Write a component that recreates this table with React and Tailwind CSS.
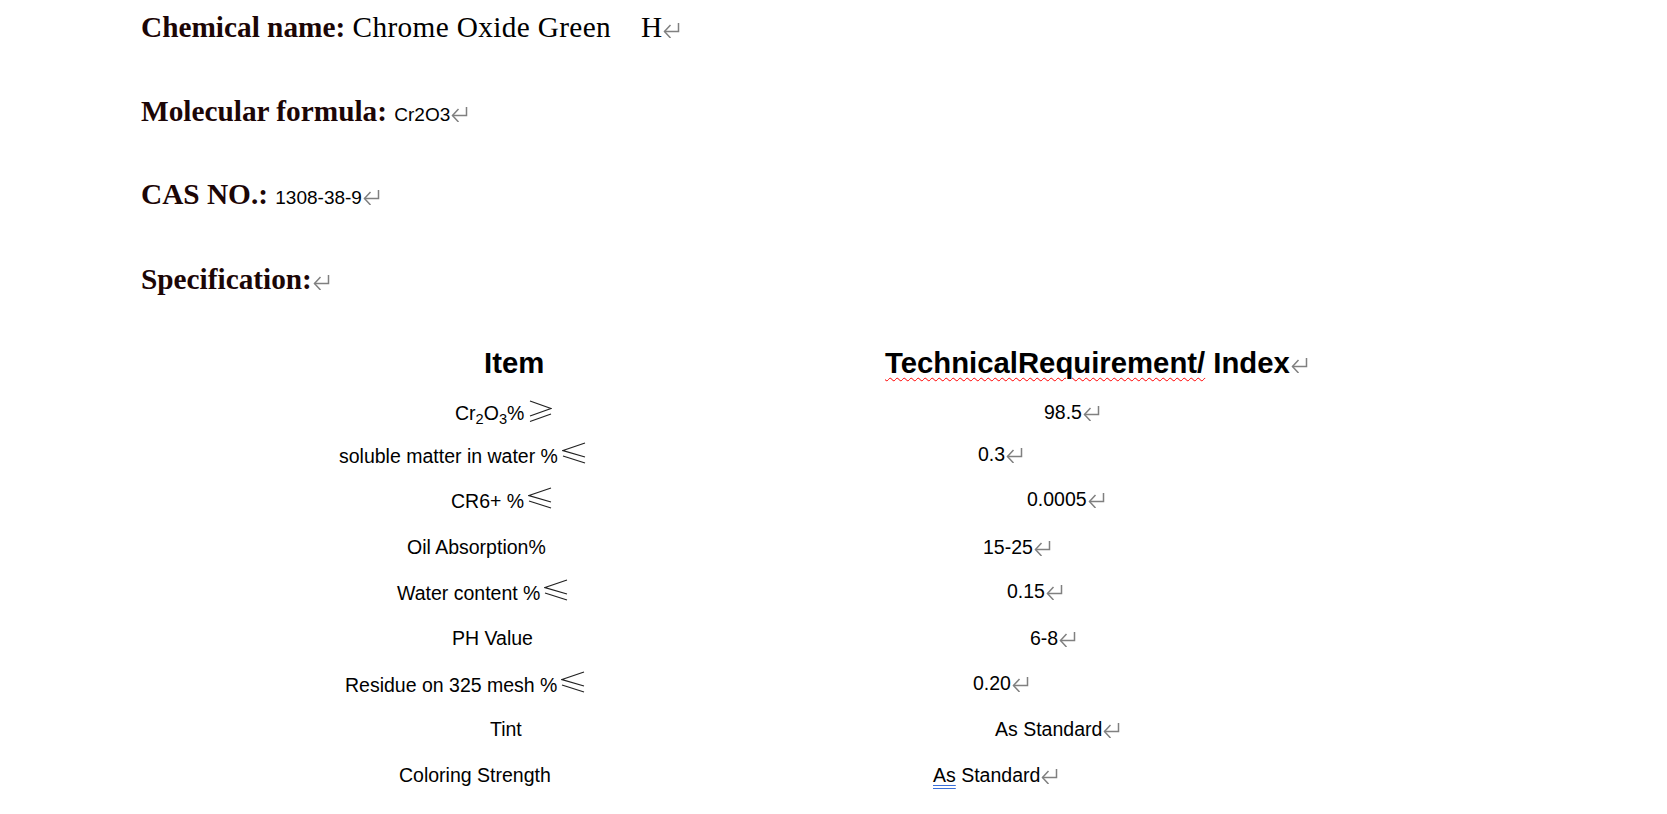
import React from "react";

const Ret = () => (
  <svg width="17" height="15" viewBox="0 0 17 15" className="inline-block ml-[1px]" fill="none" stroke="#808080" strokeWidth="1.5">
    <path d="M15.5 0V8.5H1.5" />
    <path d="M7.5 2L1.5 8.5L7.5 15" />
  </svg>
);

const Ge = () => (
  <svg width="23" height="23" viewBox="0 0 23 23" className="inline-block ml-[5px] align-[-3px]" fill="none" stroke="#222" strokeWidth="1.3">
    <path d="M1 1L22 8.5L1 16" />
    <path d="M22 14L1 21.5" />
  </svg>
);

const Le = () => (
  <svg width="24" height="22" viewBox="0 0 24 22" className="inline-block ml-[4px] align-[-1px]" fill="none" stroke="#222" strokeWidth="1.3">
    <path d="M23 1L1 8.5L23 15" />
    <path d="M1 14L23 21" />
  </svg>
);

const rows = [
  { h: "h-[42px]", a: "pl-[455px]", b: "pl-[159px]", item: (<>Cr<sub>2</sub>O<sub>3</sub>%<Ge /></>), val: "98.5" },
  { h: "h-[45px]", a: "pl-[339px]", b: "pl-[93px]", item: (<>soluble matter in water %<Le /></>), val: "0.3" },
  { h: "h-[48px]", a: "pl-[451px]", b: "pl-[142px]", item: (<>CR6+ %<Le /></>), val: "0.0005" },
  { h: "h-[44px]", a: "pl-[407px]", b: "pl-[98px]", item: (<>Oil Absorption%</>), val: "15-25" },
  { h: "h-[47px]", a: "pl-[397px]", b: "pl-[122px]", item: (<>Water content %<Le /></>), val: "0.15" },
  { h: "h-[45px]", a: "pl-[452px]", b: "pl-[145px]", item: (<>PH Value</>), val: "6-8" },
  { h: "h-[46px]", a: "pl-[345px]", b: "pl-[88px]", item: (<>Residue on 325 mesh %<Le /></>), val: "0.20" },
  { h: "h-[46px]", a: "pl-[490px]", b: "pl-[110px]", item: (<>Tint</>), val: "As Standard" },
];

export default function App() {
  return (
    <div className="w-[1667px] h-[814px] bg-white overflow-hidden text-black">
      <div className="pl-[141px] pt-[11px] font-['Liberation_Serif',serif] text-[29.3px] leading-[33px] whitespace-nowrap">
        <div className="h-[84px]">
          <span className="font-bold text-[#1c0606]">Chemical name:</span>{" "}
          <span className="tracking-[0.35px]">Chrome Oxide Green</span>
          <span className="ml-[30px]">H</span>
          <Ret />
        </div>
        <div className="h-[83px]">
          <span className="font-bold text-[#1c0606]">Molecular formula:</span>{" "}
          <span className="font-['Liberation_Sans',Arial,sans-serif] text-[19px]">Cr2O3</span>
          <Ret />
        </div>
        <div className="h-[85px]">
          <span className="font-bold text-[#1c0606]">CAS NO.:</span>{" "}
          <span className="font-['Liberation_Sans',Arial,sans-serif] text-[19px]">1308-38-9</span>
          <Ret />
        </div>
        <div className="h-[33px]">
          <span className="font-bold text-[#1c0606]">Specification:</span>
          <Ret />
        </div>
      </div>

      <div className="mt-[50px] font-['Liberation_Sans',Arial,sans-serif] whitespace-nowrap">
        <div className="flex h-[54px] text-[29.3px] leading-[34px] font-bold">
          <div className="w-[885px] shrink-0 pl-[484px]">Item</div>
          <div>
            <span className="underline decoration-wavy decoration-[#ff0000] decoration-1 underline-offset-[4px]">TechnicalRequirement/</span> Index
            <Ret />
          </div>
        </div>
        {rows.map((r, i) => (
          <div key={i} className={`flex ${r.h} text-[19.5px] leading-[24px]`}>
            <div className={`w-[885px] shrink-0 ${r.a}`}>{r.item}</div>
            <div className={r.b}>
              {r.val}
              <Ret />
            </div>
          </div>
        ))}
        <div className="flex h-[47px] text-[19.5px] leading-[24px]">
          <div className="w-[885px] shrink-0 pl-[399px]">Coloring Strength</div>
          <div className="pl-[48px]">
            <span className="underline decoration-double decoration-[#3a6fd8] underline-offset-[3px]">As</span> Standard
            <Ret />
          </div>
        </div>
      </div>
    </div>
  );
}
